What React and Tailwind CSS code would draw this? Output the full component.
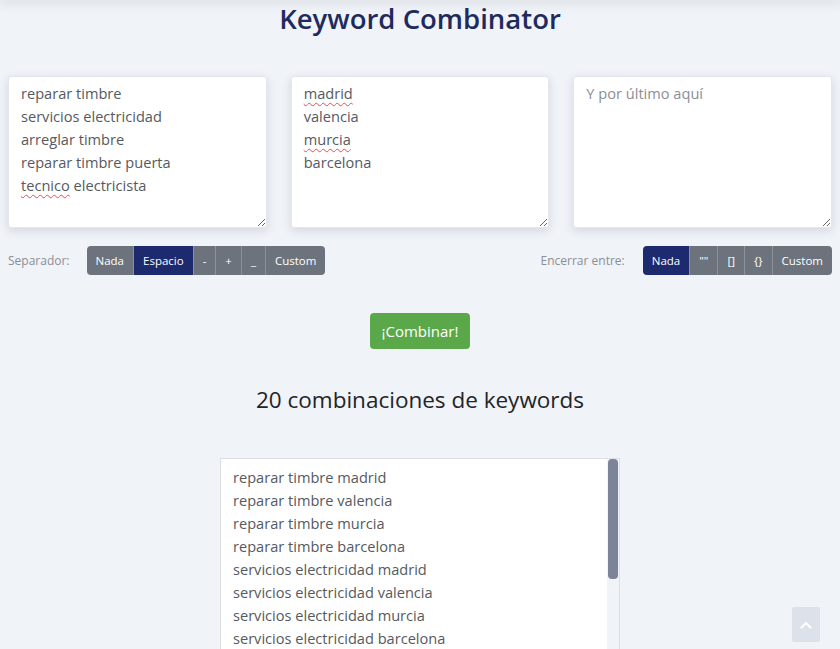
import React from 'react';

const inputs = [
    ['reparar timbre', 'servicios electricidad', 'arreglar timbre', 'reparar timbre puerta', 'tecnico electricista'],
    ['madrid', 'valencia', 'murcia', 'barcelona'],
];

const misspelled = ['tecnico', 'madrid', 'murcia'];

const separators = ['Nada', 'Espacio', '-', '+', '_', 'Custom'];
const wrappers = ['Nada', '""', '[]', '{}', 'Custom'];

function Word({ text }) {
    if (misspelled.includes(text)) {
        return <span className="underline decoration-wavy decoration-[#e05252] decoration-1 underline-offset-[3px]">{text}</span>;
    }
    return <span>{text}</span>;
}

function Line({ text }) {
    const parts = text.split(' ');
    return (
        <div>
            {parts.map((p, i) => (
                <React.Fragment key={i}>
                    {i > 0 && ' '}
                    <Word text={p} />
                </React.Fragment>
            ))}
        </div>
    );
}

function InputBox({ lines, placeholder }) {
    return (
        <div className="h-[152px] flex-1 resize overflow-auto rounded-[3px] border border-[#e3e6ea] bg-white px-3 pt-[5px] text-[14.6px] leading-[23px] text-[#555a60] shadow-[0_3px_10px_rgba(60,70,90,0.16)]">
            {lines ? lines.map((l, i) => <Line key={i} text={l} />) : <div className="text-[#8a8f96]">{placeholder}</div>}
        </div>
    );
}

function ButtonGroup({ items, active }) {
    return (
        <div className="flex overflow-hidden rounded-[4px] divide-x divide-[#8c9298]">
            {items.map((it) => (
                <button
                    key={it}
                    className={`h-[29px] px-[9px] text-[11.5px] font-medium text-white ${it === active ? 'bg-[#1e2a6e]' : 'bg-[#6c737c]'}`}
                >
                    {it}
                </button>
            ))}
        </div>
    );
}

export default function App() {
    const results = [];
    inputs[0].forEach((a) => inputs[1].forEach((b) => results.push(`${a} ${b}`)));

    return (
        <div className="relative min-h-screen bg-[#f0f3f8] font-['Open_Sans',sans-serif]">
            <div className="h-0 w-full shadow-[0_0_12px_3px_rgba(0,0,0,0.12)]" />
            <h1 className="pt-[2px] text-center text-[27.5px] font-semibold leading-[34px] text-[#1f2b5e]">
                Keyword Combinator
            </h1>

            <div className="mt-[40px] flex gap-6 px-2">
                <InputBox lines={inputs[0]} />
                <InputBox lines={inputs[1]} />
                <InputBox placeholder="Y por último aquí" />
            </div>

            <div className="mt-[18px] flex items-center justify-between px-2">
                <div className="flex items-center gap-[17px]">
                    <span className="text-[12px] text-[#8a8f96]">Separador:</span>
                    <ButtonGroup items={separators} active="Espacio" />
                </div>
                <div className="flex items-center gap-[18px]">
                    <span className="text-[12px] text-[#8a8f96]">Encerrar entre:</span>
                    <ButtonGroup items={wrappers} active="Nada" />
                </div>
            </div>

            <div className="mt-[38px] flex justify-center">
                <button className="h-[36px] rounded-[4px] bg-[#5ba84a] px-3 text-[15px] text-white">¡Combinar!</button>
            </div>

            <h2 className="mt-[36px] text-center text-[22.5px] leading-[30px] text-[#222428]">
                20 combinaciones de keywords
            </h2>

            <div className="mt-[43px] flex justify-center pb-10">
                <div className="relative h-[235px] w-[400px] overflow-hidden border border-[#dcdfe5] bg-white">
                    <div className="pl-3 pr-[24px] pt-[7px] text-[14.6px] leading-[23px] text-[#555a60]">
                        {results.map((r) => (
                            <div key={r}>{r}</div>
                        ))}
                    </div>
                    <div className="absolute right-0 top-0 h-full w-[12px] bg-[#f0f3f8]">
                        <div className="ml-px h-[120px] w-[10px] rounded-[4px] bg-[#7b8499]" />
                    </div>
                </div>
            </div>

            <button className="fixed bottom-[7px] right-[20px] flex h-[35px] w-[28px] items-center justify-center rounded-[2px] bg-[#dde1ea]">
                <svg width="12" height="8" viewBox="0 0 12 8" fill="none" stroke="white" strokeWidth="2.2" strokeLinecap="round" strokeLinejoin="round">
                    <path d="M1.5 6.5 6 2l4.5 4.5" />
                </svg>
            </button>
        </div>
    );
}
